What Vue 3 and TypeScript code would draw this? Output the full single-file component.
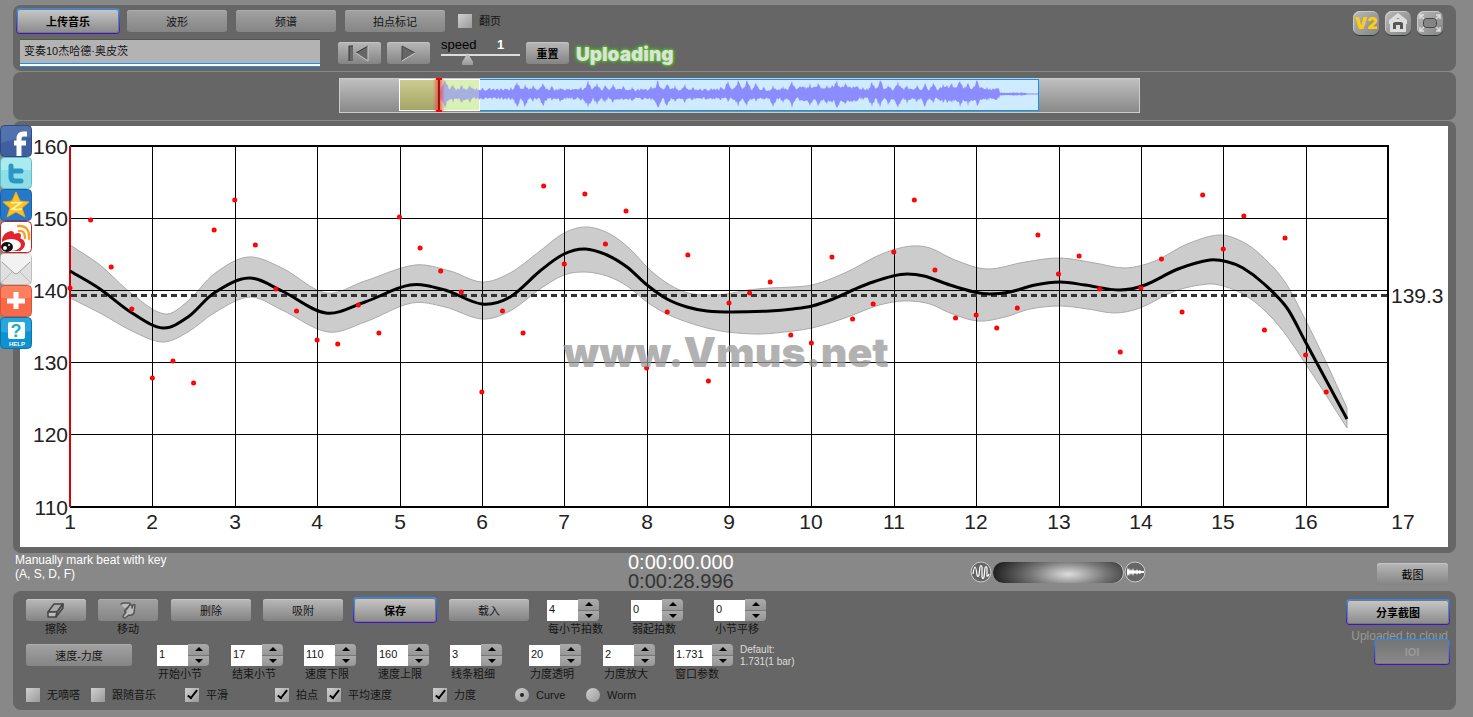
<script setup lang="ts">
import { ref } from 'vue'

type Point = [number, number]

interface Spin {
  id: string
  label: string
  value: string
  wide?: boolean
}

interface Check {
  id: string
  label: string
  on: boolean
}

const title = ref('变奏10杰哈德·奥皮茨')
const speed = ref(1)
const gain = ref(58)
const pageTurn = ref(false)
const drawMode = ref('curve')

const tabs = ['波形', '频谱', '拍点标记']

const beatSpins = ref<Spin[]>([
  { id: 'beats', label: '每小节拍数', value: '4' },
  { id: 'pickup', label: '弱起拍数', value: '0' },
  { id: 'shift', label: '小节平移', value: '0' },
])

const viewSpins = ref<Spin[]>([
  { id: 'first', label: '开始小节', value: '1' },
  { id: 'last', label: '结束小节', value: '17' },
  { id: 'low', label: '速度下限', value: '110' },
  { id: 'high', label: '速度上限', value: '160' },
  { id: 'stroke', label: '线条粗细', value: '3' },
  { id: 'alpha', label: '力度透明', value: '20' },
  { id: 'scale', label: '力度放大', value: '2' },
  { id: 'window', label: '窗口参数', value: '1.731', wide: true },
])

const checks = ref<Check[]>([
  { id: 'mute', label: '无嘀嗒', on: false },
  { id: 'follow', label: '跟随音乐', on: false },
  { id: 'smooth', label: '平滑', on: true },
  { id: 'beat', label: '拍点', on: true },
  { id: 'average', label: '平均速度', on: true },
  { id: 'dynamics', label: '力度', on: true },
])

function step(spin: Spin, by: number) {
  spin.value = String(Math.round((Number(spin.value) + by) * 1000) / 1000)
}

/* Tempo chart: bar numbers run along x, beats per minute along y. */
const left = 50
const right = 1368
const top = 20
const bottom = 381
const barX = (bar: number) => Math.round(left + ((bar - 1) * (right - left)) / 16)
const bars = Array.from({ length: 17 }, (_, i) => i + 1)
const tempos = [160, 150, 140, 130, 120, 110]
const tempoY = (bpm: number) => Math.floor(top + ((160 - bpm) * (bottom - top)) / 50)

const beatY = [
  162, 94, 141, 183, 252, 235, 257, 104, 74, 119, 163, 185, 214, 218, 179, 207,
  91, 122, 145, 166, 266, 185, 207, 60, 138, 68, 118, 85, 242, 186, 129, 255,
  177, 167, 156, 209, 217, 131, 193, 178, 126, 74, 144, 192, 189, 202, 182, 109,
  148, 130, 163, 226, 162, 133, 186, 69, 123, 90, 204, 112, 229, 266,
]
const beats = beatY.map((y, i) => ({ x: left + (i * (right - left)) / 64, y }))

const mid: Point[] = [
  [50, 145], [80, 163], [112, 187], [143, 202], [168, 191], [194, 167],
  [229, 152], [262, 165], [306, 187], [345, 176],
  [390, 159], [425, 164], [462, 178], [490, 171], [520, 145],
  [544, 128], [565, 123], [587, 129], [607, 141], [627, 159], [647, 173], [667, 181], [687, 185],
  [712, 186], [750, 185], [773, 183], [792, 180], [813, 173], [833, 164], [853, 156], [873, 150],
  [887, 148], [904, 150], [930, 159], [954, 166], [970, 168], [990, 166], [1015, 159], [1040, 156],
  [1065, 159], [1100, 164], [1125, 159], [1158, 143], [1190, 134], [1208, 136],
  [1223, 142], [1243, 157], [1267, 182], [1285, 215], [1306, 254], [1327, 293],
]
const upper: Point[] = [
  [50, 119], [80, 139], [112, 168], [145, 188], [168, 175], [194, 148],
  [228, 131], [262, 142], [306, 167], [345, 155],
  [395, 139], [430, 145], [462, 156], [490, 147], [520, 125], [544, 107], [567, 101],
  [590, 108], [610, 123], [630, 144], [650, 159], [668, 167], [687, 169], [707, 168], [728, 164],
  [750, 162], [773, 161], [792, 159], [813, 152], [833, 143], [853, 132], [873, 124], [892, 120],
  [910, 122], [935, 134], [967, 143], [1005, 136], [1040, 132], [1075, 137],
  [1105, 142], [1135, 135], [1165, 119], [1199, 109], [1223, 116], [1243, 131],
  [1265, 156], [1285, 193], [1306, 236], [1327, 282],
]
const lower: Point[] = [
  [50, 172], [80, 187], [112, 205], [143, 216], [168, 206], [194, 187],
  [230, 171], [262, 184], [308, 206], [345, 196],
  [392, 177], [425, 181], [462, 193], [490, 185], [520, 163], [544, 149], [565, 146],
  [587, 150], [607, 160], [627, 176], [647, 188], [667, 196], [687, 202], [707, 206], [740, 208],
  [773, 205], [792, 202], [813, 196], [833, 189], [853, 181], [873, 176], [890, 175], [910, 178],
  [930, 187], [958, 195], [985, 191], [1010, 183], [1040, 180], [1068, 183], [1095, 187],
  [1120, 182], [1155, 165], [1188, 158], [1203, 160], [1223, 168], [1243, 183],
  [1263, 205], [1285, 237], [1306, 269], [1327, 302],
]

/* Cubic through all points; the tangent at each follows its neighbours. */
function spline(points: Point[]): string {
  const slope = (i: number) => {
    const a = points[Math.max(0, i - 1)]
    const b = points[Math.min(points.length - 1, i + 1)]
    return (b[1] - a[1]) / (b[0] - a[0])
  }
  let d = ''
  for (let i = 0; i < points.length - 1; i++) {
    const [x1, y1] = points[i]
    const [x2, y2] = points[i + 1]
    const third = (x2 - x1) / 3
    const c1 = [x1 + third, y1 + slope(i) * third].map((n) => n.toFixed(1))
    const c2 = [x2 - third, y2 - slope(i + 1) * third].map((n) => n.toFixed(1))
    d += `C${c1} ${c2} ${x2},${y2}`
  }
  return d
}

const midPath = `M${mid[0]}${spline(mid)}`
const lowerBack = [...lower].reverse()
const bandPath = `M${upper[0]}${spline(upper)}L${lowerBack[0]}${spline(lowerBack)}Z`

/* Overview waveform: each note is an attack [x, height above, depth below]. */
const attacks: [number, number, number][] = [
  [106, 14, 14], [114, 9, 9], [123, 9, 9], [131, 9, 9], [143, 6, 4], [151, 6, 4], [161, 4, 5],
  [172, 7, 6], [178, 12, 13], [186, 10, 13], [194, 9, 8], [204, 11, 12], [213, 8, 7], [221, 6, 8],
  [242, 7, 7], [249, 14, 14], [258, 11, 11], [266, 9, 9], [274, 10, 9], [284, 8, 6], [293, 7, 7],
  [312, 8, 7], [319, 14, 14], [328, 10, 12], [336, 9, 8], [346, 10, 9], [354, 7, 6], [382, 7, 6],
  [389, 13, 8], [399, 14, 13], [408, 14, 12], [417, 11, 8], [425, 7, 6], [434, 9, 13], [444, 8, 9],
  [453, 13, 14], [461, 8, 7], [471, 11, 12], [479, 11, 12], [488, 9, 10], [493, 9, 9], [498, 14, 14],
  [506, 11, 10], [514, 8, 7], [524, 7, 6], [533, 12, 13], [541, 14, 14], [549, 9, 11], [559, 13, 14],
  [568, 9, 10], [578, 9, 8], [586, 11, 13], [594, 11, 9], [604, 10, 9], [608, 9, 9], [613, 11, 9],
  [621, 13, 13], [629, 11, 12], [638, 14, 12], [648, 7, 7], [657, 6, 6],
]

function wave(): string {
  const rise: string[] = []
  const fall: string[] = []
  for (let x = 101; x <= 699; x++) {
    const noise = Math.abs(Math.sin(x * 12.9898) * 43758.5453) % 1
    const other = Math.abs(Math.sin(x * 78.233) * 12543.853) % 1
    const dense = (x > 460 && x < 520) || (x > 600 && x < 645)
    const body = dense ? 5 : 3
    const tail = x > 687 ? 0.5 : 0.8 + noise * 0.8
    let up = x > 660 ? tail : body + noise * 3
    let down = x > 660 ? tail : body + other * 3
    for (const [at, high, deep] of attacks) {
      const gap = Math.abs(x - at)
      const weight = gap < 2 ? 1 - gap * 0.1 : Math.exp(-(gap - 1) / 4)
      if (x <= 660) {
        up = Math.max(up, high * weight * (gap === 0 ? 1 : 0.6 + noise * 0.4))
        down = Math.max(down, deep * weight * (gap === 0 ? 1 : 0.6 + other * 0.4))
      }
    }
    rise.push(`${x},${(16 - up).toFixed(1)}`)
    fall.unshift(`${x},${(16 + down).toFixed(1)}`)
  }
  return [...rise, ...fall].join(' ')
}
const wavePoints = wave()
</script>

<template>
  <div class="app">
    <nav class="social" aria-label="Share">
      <a href="#facebook" aria-label="Facebook">
        <svg viewBox="0 0 32 32">
          <rect x="0.5" y="0.5" width="31" height="31" rx="4" fill="#3f5f9f" stroke="#2f4b85" />
          <path d="M1 5q0-4 4-4h22q4 0 4 4v7q-14 1-30 6z" fill="#5f7fb8" opacity=".6" />
          <path d="M27 9h-4q-4 0-4 5v17M14 18h12" fill="none" stroke="#fff" stroke-width="5" />
        </svg>
      </a>
      <a href="#twitter" aria-label="Twitter">
        <svg viewBox="0 0 32 32">
          <rect x="0.5" y="0.5" width="31" height="31" rx="4" fill="#8edfe6" stroke="#62bccb" />
          <path d="M1 5q0-4 4-4h22q4 0 4 4v8H1z" fill="#b5f0f2" opacity=".7" />
          <path d="M11 9v11q0 4 4 4h6M11 14h10" fill="none" stroke="#2b97c6" stroke-width="5" stroke-linecap="round" stroke-linejoin="round" />
        </svg>
      </a>
      <a href="#qzone" aria-label="Qzone">
        <svg viewBox="0 0 32 32">
          <rect x="0.5" y="0.5" width="31" height="31" rx="4" fill="#2678c8" stroke="#1c5fa8" />
          <path d="M16 3l4 9 9 1-7 6 3 9-9-5-9 5 3-9-7-6 9-1z" fill="#ffc320" stroke="#f0a818" />
          <path d="M11 14q5-1 10 0l-9 6q5 1 10 0" fill="none" stroke="#fff4b8" stroke-width="1.6" />
        </svg>
      </a>
      <a href="#weibo" aria-label="Weibo">
        <svg viewBox="0 0 32 32">
          <rect x="0.5" y="0.5" width="31" height="31" rx="4" fill="#fff" stroke="#c62020" />
          <path d="M2 18q2-7 9-8 3 0 3 3 7-3 7 2 0 2-1 2 5 2 5 6 0 4-5 7H5q-3-5-3-12z" fill="#e5222b" />
          <ellipse cx="11" cy="24" rx="10" ry="6" fill="#fff" />
          <ellipse cx="7" cy="26" rx="6" ry="5" fill="#111" />
          <circle cx="5" cy="27" r="2" fill="#fff" />
          <circle cx="9" cy="24" r="1" fill="#fff" />
          <path d="M19 10q6-1 6 7M18 5q12-1 11 13" fill="none" stroke="#f5a02a" stroke-width="2.4" stroke-linecap="round" />
        </svg>
      </a>
      <a href="#mail" aria-label="Mail">
        <svg viewBox="0 0 32 32">
          <rect x="0.5" y="0.5" width="31" height="31" rx="4" fill="#e0e0e0" stroke="#bdbdbd" />
          <path d="M1 30l12-12M31 30L19 18" stroke="#bbb" />
          <path d="M1 8l15 14L31 8V3q0-2-2-2H3Q1 1 1 3z" fill="#f2f2f2" />
          <path d="M2 9l12 11q2 2 4 0L30 9" fill="none" stroke="#a0a0a0" />
        </svg>
      </a>
      <a href="#more" aria-label="More">
        <svg viewBox="0 0 32 32">
          <rect x="0.5" y="0.5" width="31" height="31" rx="4" fill="#f8694a" stroke="#dd5236" />
          <path d="M1 5q0-4 4-4h22q4 0 4 4v8H1z" fill="#ff8e70" opacity=".6" />
          <path d="M16 7v17M7 16h18" stroke="#fff" stroke-width="5" />
        </svg>
      </a>
      <a href="#help" aria-label="Help">
        <svg viewBox="0 0 32 32">
          <rect x="0.5" y="0.5" width="31" height="31" rx="4" fill="#0f92cf" stroke="#0a74aa" />
          <path d="M1 5q0-4 4-4h22q4 0 4 4v9q-14 3-30 1z" fill="#35b4e6" opacity=".6" />
          <rect x="8" y="5" width="17" height="17" rx="2" fill="#fff" />
          <text x="16" y="20" class="glyph mark">?</text>
          <text x="17" y="29" class="glyph help">HELP</text>
        </svg>
      </a>
    </nav>

    <header class="panel head">
      <div class="head-main">
        <div class="row tabs">
          <button type="button" class="btn primary">上传音乐</button>
          <button v-for="tab in tabs" :key="tab" type="button" class="btn dim">{{ tab }}</button>
          <label class="tick turn"><input v-model="pageTurn" type="checkbox" />翻页</label>
        </div>
        <div class="row transport">
          <input v-model="title" class="title" type="text" aria-label="Title" />
          <div class="keys">
            <button type="button" class="btn key" aria-label="Rewind">
              <svg viewBox="0 0 43 21">
                <rect x="11" y="3" width="4" height="15" fill="#666" />
                <path d="M11 18V3h4" fill="none" stroke="#333" />
                <path d="M30 3v15L18 10z" fill="#666" />
                <path d="M18 10L30 3" stroke="#333" />
                <path d="M30 3v15L18 10" fill="none" stroke="#ccc" />
              </svg>
            </button>
            <button type="button" class="btn key" aria-label="Play">
              <svg viewBox="0 0 43 21">
                <path d="M15 3v15l13-8z" fill="#666" />
                <path d="M15 18V3l13 7" fill="none" stroke="#444" />
                <path d="M15 18l13-8" stroke="#ccc" />
              </svg>
            </button>
          </div>
          <div class="speed">
            <label for="speed">speed</label>
            <output for="speed">{{ speed }}</output>
            <input id="speed" v-model.number="speed" type="range" min="0.1" max="3" step="0.1" />
          </div>
          <button type="button" class="btn key strong">重置</button>
          <span class="status">Uploading</span>
        </div>
      </div>
      <div class="corner">
        <button type="button" class="chip v2">V2</button>
        <button type="button" class="chip" aria-label="Home">
          <svg viewBox="0 0 26 24">
            <path d="M13 2l9 7v4h-1v8H5v-8H4V9z" fill="#ddd" />
            <path d="M8 18v-6l2-1h6l2 1v6h-3v-4h-4v4z" fill="#555" />
            <path d="M11 8l2-1 2 1z" fill="#777" />
          </svg>
        </button>
        <button type="button" class="chip" aria-label="Full screen">
          <svg viewBox="0 0 26 24" fill="none">
            <rect x="6.5" y="7.5" width="13" height="9" rx="3" fill="#858585" stroke="#444" />
            <path d="M3 8V4h4M3 4l4 4M19 4h4v4M23 4l-4 4M3 16v4h4M3 20l4-4M23 16v4h-4M23 20l-4-4" stroke="#ddd" stroke-width="1.5" />
          </svg>
        </button>
      </div>
    </header>

    <section class="panel overview" aria-label="Overview">
      <svg class="strip" viewBox="0 0 801 35">
        <defs>
          <linearGradient id="steel" x1="0" y1="0" x2="0" y2="1">
            <stop offset="0" stop-color="#c0c0c0" />
            <stop offset="1" stop-color="#888" />
          </linearGradient>
          <linearGradient id="khaki" x1="0" y1="0" x2="0" y2="1">
            <stop offset="0" stop-color="#cccc92" />
            <stop offset="1" stop-color="#a5a566" />
          </linearGradient>
          <linearGradient id="glow">
            <stop offset="0" stop-color="#f33" stop-opacity="0" />
            <stop offset=".5" stop-color="#f33" stop-opacity=".8" />
            <stop offset="1" stop-color="#f33" stop-opacity="0" />
          </linearGradient>
        </defs>
        <rect x="0.5" y="0.5" width="800" height="34" fill="url(#steel)" stroke="#ccc" />
        <rect x="60.5" y="1.5" width="639" height="31" fill="#cfebff" stroke="#0b94f0" />
        <rect x="60.5" y="1.5" width="80" height="31" fill="#d9f1bf" stroke="#fff" />
        <rect x="61" y="2" width="39" height="30" fill="url(#khaki)" />
        <polygon :points="wavePoints" fill="#8a8cff" />
        <rect x="101" y="2" width="39" height="30" fill="#d9f1a0" opacity=".35" />
        <rect x="94" y="1" width="12" height="33" fill="url(#glow)" />
        <path d="M100 1v32" stroke="#700" stroke-width="1.5" />
        <path d="M97 1h6M97 33h6" stroke="#f00" stroke-width="2" />
      </svg>
    </section>

    <main class="panel stage">
      <svg class="chart" viewBox="0 0 1428 421" role="img" aria-label="Tempo curve">
        <path :d="bandPath" fill="#ccc" stroke="#aaa" />
        <g class="grid">
          <path v-for="bar in bars" :key="bar" :d="`M${barX(bar) + 0.5} ${top}V${bottom}`" />
          <path v-for="bpm in tempos" :key="bpm" :d="`M${left} ${tempoY(bpm) + 0.5}H${right}`" />
        </g>
        <path d="M50 20H1368V381H50" fill="none" stroke="#000" stroke-width="2" />
        <path d="M50 20V381" stroke="#d00" stroke-width="2" />
        <path d="M51 169.5H1368" class="average" />
        <path :d="midPath" class="curve" />
        <g class="beats">
          <circle v-for="beat in beats" :key="beat.x" :cx="beat.x" :cy="beat.y" r="1.5" />
        </g>
        <text x="706" y="241" class="watermark">www.Vmus.net</text>
        <text v-for="bpm in tempos" :key="bpm" x="48" :y="tempoY(bpm) + 8" class="axis end">{{ bpm }}</text>
        <text
          v-for="bar in bars"
          :key="bar"
          :x="bar === 17 ? barX(bar) + 15 : barX(bar)"
          y="403"
          class="axis middle"
        >{{ bar }}</text>
        <text x="1371" y="177" class="axis">139.3</text>
      </svg>
    </main>

    <section class="status-bar">
      <p class="hint">Manually mark beat with key<br />(A, S, D, F)</p>
      <div class="clock">
        <div class="now">0:00:00.000</div>
        <div class="total">0:00:28.996</div>
      </div>
      <div class="gain">
        <svg viewBox="0 0 22 22" aria-hidden="true">
          <circle cx="11" cy="11" r="10" fill="#666" stroke="#ccc" />
          <path d="M3 13q1-7 2-7t2 8q1 3 2 0l1-8q1-3 2 0v10q1 3 2 0l1-9q1-3 2 0v8q1 1 2-2" fill="none" stroke="#fff" stroke-width="1.2" />
        </svg>
        <input v-model.number="gain" type="range" min="0" max="100" aria-label="Zoom" />
        <svg viewBox="0 0 22 22" aria-hidden="true">
          <circle cx="11" cy="11" r="10" fill="#666" stroke="#ccc" />
          <path d="M3 10V6l1 3 1-2 1 3 1-2 1 2 1-3 1 3 1-1 1 1 1-2 1 2 2-1 1 1h3v2h-3l-1 1-2-1-1 2-1-2-1 1-1-1-1 3-1-3-1 2-1-2-1 3-1-2-1 3z" fill="#fff" />
        </svg>
      </div>
      <button type="button" class="btn shot">截图</button>
    </section>

    <footer class="panel tools">
      <div class="tool-rows">
        <div class="tool-row actions">
          <div class="tool">
            <button type="button" class="btn" aria-label="擦除">
              <svg viewBox="0 0 60 21" stroke="#444" stroke-width="1.5" stroke-linejoin="round">
                <path d="M22 12l6-8h9l-6 8z" fill="#aaa" />
                <path d="M22 12h9l-1 5h-8z" fill="#bbb" />
                <path d="M31 12l6-8v4l-7 9z" fill="#888" />
              </svg>
            </button>
            <span class="caption centred">擦除</span>
          </div>
          <div class="tool">
            <button type="button" class="btn dim" aria-label="移动">
              <svg viewBox="0 0 60 21" stroke-linejoin="round" stroke-linecap="round">
                <path d="M23 4q1-1 4-1h4q2 1 1 2l-5 5q-1 2 1 2l-3 4q0 2 2 2l4-3q3 1 5-2l1-8q-1-1-2 0l-1 3V5q-2-1-3 1l-3 4" fill="#bbb" stroke="#555" stroke-width="1.5" />
              </svg>
            </button>
            <span class="caption centred">移动</span>
          </div>
          <div><button type="button" class="btn">删除</button></div>
          <div><button type="button" class="btn">吸附</button></div>
          <div><button type="button" class="btn primary">保存</button></div>
          <div><button type="button" class="btn">载入</button></div>
          <div v-for="spin in beatSpins" :key="spin.id" class="spin">
            <div class="spin-box">
              <input :id="spin.id" v-model="spin.value" type="text" />
              <span class="steps">
                <button type="button" aria-label="+" @click="step(spin, 1)"><i class="up"></i></button>
                <button type="button" aria-label="-" @click="step(spin, -1)"><i class="down"></i></button>
              </span>
            </div>
            <label class="caption" :for="spin.id">{{ spin.label }}</label>
          </div>
        </div>

        <div class="tool-row ranges">
          <div><button type="button" class="btn dim">速度-力度</button></div>
          <div v-for="spin in viewSpins" :key="spin.id" class="spin" :class="{ wide: spin.wide }">
            <div class="spin-box">
              <input :id="spin.id" v-model="spin.value" type="text" />
              <span class="steps">
                <button type="button" aria-label="+" @click="step(spin, 1)"><i class="up"></i></button>
                <button type="button" aria-label="-" @click="step(spin, -1)"><i class="down"></i></button>
              </span>
            </div>
            <label class="caption" :for="spin.id">{{ spin.label }}</label>
          </div>
          <p class="default">Default:<br />1.731(1 bar)</p>
        </div>

        <div class="tool-row options">
          <label v-for="check in checks" :key="check.id" class="tick">
            <input v-model="check.on" type="checkbox" />{{ check.label }}
          </label>
          <label class="tick"><input v-model="drawMode" type="radio" name="mode" value="curve" />Curve</label>
          <label class="tick"><input v-model="drawMode" type="radio" name="mode" value="worm" />Worm</label>
        </div>
      </div>

      <div class="share">
        <button type="button" class="btn primary">分享截图</button>
        <span class="cloud">Uploaded to cloud</span>
        <button type="button" class="btn primary link" disabled>IOI</button>
      </div>
    </footer>
  </div>
</template>

<style>
html,
body {
  background: #888;
}
</style>

<style scoped>
.app {
  position: relative;
  min-width: 1100px;
  padding: 5px 17px 7px 13px;
  background: #888;
  color: #151515;
  font-family: "Liberation Sans", "Noto Sans CJK SC", sans-serif;
  font-size: 11px;
  line-height: 14px;
}

.app *,
.app *::before,
.app *::after {
  box-sizing: border-box;
}

button,
input {
  margin: 0;
  font-family: inherit;
  font-size: 11px;
  color: inherit;
}

p {
  margin: 0;
}

svg {
  display: block;
}

.panel {
  margin-bottom: 1px;
  border-radius: 8px;
  background: #666;
}

/* share links along the left edge */
.social {
  position: absolute;
  z-index: 2;
  left: 0;
  top: 125px;
  display: flex;
  flex-direction: column;
}

.social a,
.social svg {
  display: block;
  width: 32px;
  height: 32px;
}

.glyph {
  font-weight: 700;
}

.glyph.mark {
  font-size: 18px;
  text-anchor: middle;
  fill: #18b0c8;
}

.glyph.help {
  font-size: 6px;
  text-anchor: middle;
  fill: #fff;
}

/* buttons */
.btn {
  display: inline-flex;
  align-items: center;
  justify-content: center;
  height: 22px;
  padding: 0;
  border: 0;
  border-radius: 3px;
  background: linear-gradient(#b8b8b8, #848484);
  box-shadow: inset 0 1px #c4c4c4;
  white-space: nowrap;
}

.btn.dim {
  background: linear-gradient(#a2a2a2, #858585);
  box-shadow: inset 0 1px #acacac;
}

.btn.primary {
  height: 26px;
  margin: -2px;
  border: 1px solid transparent;
  border-radius: 4px;
  background:
    linear-gradient(#c8c8c8, #8a8a8a) padding-box,
    linear-gradient(#2090ff, #4010d0) border-box;
  box-shadow: inset 0 0 0 1px #777;
  color: #000;
  font-weight: 700;
}

.strong {
  font-weight: 700;
}

/* check boxes and radios */
.tick {
  display: flex;
  align-items: center;
  gap: 7px;
  height: 14px;
  white-space: nowrap;
}

.tick input {
  appearance: none;
  position: relative;
  flex: none;
  width: 14px;
  height: 14px;
  background: linear-gradient(135deg, #d0d0d0, #9a9a9a);
}

.tick input[type="checkbox"]:checked::after {
  content: "";
  position: absolute;
  left: 5px;
  top: 0;
  width: 5px;
  height: 11px;
  border: solid #000;
  border-width: 0 2px 2px 0;
  transform: rotate(38deg);
}

.tick input[type="radio"] {
  border-radius: 50%;
}

.tick input[type="radio"]:checked::after {
  content: "";
  position: absolute;
  inset: 5px;
  border-radius: 50%;
  background: #222;
}

/* header */
.head {
  display: flex;
  justify-content: space-between;
  padding: 5px 13px 4px 5px;
}

.row {
  display: flex;
}

.tabs {
  gap: 9px;
  height: 21px;
  align-items: center;
}

.tabs .btn {
  width: 100px;
}

.tabs .primary {
  width: 104px;
}

.turn {
  margin-left: 4px;
}

.transport {
  align-items: center;
  height: 28px;
  margin-top: 8px;
  padding-left: 2px;
}

.title {
  width: 300px;
  height: 28px;
  padding: 0 4px 7px;
  border: 0;
  border-top: 1px solid #555;
  outline: 0;
  background: #b3b3b3;
  box-shadow:
    inset 0 -1px #1a90f0,
    inset 0 -3px #fff,
    inset 0 -4px #1a90f0;
}

.keys {
  display: flex;
  gap: 6px;
  margin: 0 11px 0 18px;
}

.key {
  width: 43px;
  color: #000;
}

.key svg {
  width: 43px;
  height: 21px;
}

.speed {
  display: grid;
  grid-template-columns: 56px auto;
  width: 79px;
  margin-right: 6px;
  padding-bottom: 3px;
  font-size: 13px;
  line-height: 13px;
  color: #000;
}

.speed output {
  color: #fff;
  font-weight: 700;
}

.speed input {
  appearance: none;
  grid-column: 1 / -1;
  width: 79px;
  height: 14px;
  background: linear-gradient(#ddd, #ddd) 0 3px / 100% 2px no-repeat;
}

.speed input::-webkit-slider-thumb {
  appearance: none;
  width: 11px;
  height: 12px;
  margin-top: 2px;
  background: linear-gradient(#ccc, #999);
  clip-path: polygon(50% 0, 100% 75%, 100% 100%, 0 100%, 0 75%);
}

.status {
  margin-left: 7px;
  padding-top: 3px;
  color: #e0e0e0;
  font-family: Inter, "DejaVu Sans", sans-serif;
  font-size: 19px;
  font-weight: 900;
  line-height: 20px;
  text-shadow:
    0 0 2px #5c2,
    0 0 3px #5c2,
    0 0 4px #5c2;
}

.corner {
  display: flex;
  gap: 6px;
  padding-top: 1px;
}

.chip {
  width: 26px;
  height: 24px;
  padding: 0;
  border: 0;
  border-radius: 7px;
  background: linear-gradient(135deg, #b8b8b8, #848484);
  box-shadow:
    inset 1px 1px #c8c8c8,
    0 1px #2a3a34;
}

.chip.v2 {
  color: #ffcc10;
  font-family: Inter, "DejaVu Sans", sans-serif;
  font-size: 16px;
  font-weight: 900;
}

/* overview */
.overview {
  display: flex;
  justify-content: center;
  padding: 6px 0 7px 10px;
}

.strip {
  width: 100%;
  max-width: 801px;
}

/* chart */
.stage {
  margin-bottom: 0;
  padding: 5px 8px 6px 7px;
}

.chart {
  width: 100%;
  background: #fff;
}

.grid path {
  stroke: #000;
  stroke-width: 1;
}

.average {
  stroke: #333;
  stroke-width: 3;
  stroke-dasharray: 6 4;
}

.curve {
  fill: none;
  stroke: #000;
  stroke-width: 3;
}

.beats circle {
  fill: #c55;
  stroke: #f00;
  stroke-width: 2;
}

.watermark {
  fill: #999;
  fill-opacity: 0.75;
  font-family: Inter, "DejaVu Sans", sans-serif;
  font-size: 41px;
  font-weight: 900;
  text-anchor: middle;
}

.axis {
  fill: #222;
  font-size: 21px;
}

.end {
  text-anchor: end;
}

.middle {
  text-anchor: middle;
}

/* strip under the chart */
.status-bar {
  display: grid;
  grid-template-columns: 613fr 342fr 407fr 71px;
  align-items: center;
  height: 38px;
  padding: 0 8px 0 2px;
}

.hint {
  align-self: start;
  color: #fff;
  font-size: 12px;
}

.clock {
  font-size: 20px;
  line-height: 19px;
}

.now {
  color: #fff;
}

.total {
  color: #333;
}

.gain {
  display: flex;
  align-items: center;
  gap: 1px;
}

.gain svg {
  width: 22px;
  height: 22px;
}

.gain input {
  appearance: none;
  width: 130px;
  height: 21px;
  border-radius: 11px;
  background: radial-gradient(ellipse 75px 26px at 58% 58%, #ddd, #777 50%, #222);
  box-shadow: 1px 0 #ccc;
}

.gain input::-webkit-slider-thumb {
  appearance: none;
  width: 10px;
  height: 21px;
}

.shot {
  margin-top: 4px;
  color: #000;
}

/* tools */
.tools {
  display: flex;
  justify-content: space-between;
  margin-bottom: 0;
  padding: 8px 8px 8px 13px;
}

.tool-row {
  display: grid;
  align-items: start;
}

.actions {
  grid-template-columns: 72px 73px 92px 92px 94px 98px 84px 83px auto;
  height: 45px;
}

.ranges {
  grid-template-columns: 131px 74px 73px 73px 73px 79px 74px 71px 66px auto;
  height: 44px;
}

.options {
  grid-template-columns: 65px 94px 90px 52px 106px 82px 71px auto;
  height: 14px;
}

.tool-row .btn {
  width: 80px;
  vertical-align: top;
}

.tool-row .primary {
  width: 84px;
}

.tool .btn {
  width: 60px;
}

.tool svg {
  width: 60px;
  height: 21px;
}

.tool-row.ranges .btn {
  width: 106px;
}

.caption {
  display: block;
  margin-top: 1px;
  padding-left: 1px;
  white-space: nowrap;
}

.centred {
  width: 60px;
  padding: 0;
  text-align: center;
}

.spin-box {
  display: flex;
  height: 22px;
}

.spin-box input {
  width: 31px;
  height: 21px;
  padding: 0 2px 4px;
  margin-top: 1px;
  border: 0;
  outline: 0;
  background: #fff;
}

.wide .spin-box input {
  width: 38px;
}

.steps {
  display: flex;
  flex-direction: column;
  gap: 1px;
  width: 21px;
  height: 22px;
  overflow: hidden;
  border-radius: 0 4px 4px 0;
  background: #777;
}

.steps button {
  display: flex;
  flex: 1;
  align-items: center;
  justify-content: center;
  padding: 0;
  border: 0;
  background: linear-gradient(#aaa, #979797);
}

.steps i {
  border: 4px solid transparent;
}

.steps .up {
  border-top: 0;
  border-bottom-color: #000;
}

.steps .down {
  border-bottom: 0;
  border-top-color: #000;
}

.default {
  color: #ddd;
  font-size: 10px;
  line-height: 12px;
  white-space: nowrap;
}

.share {
  display: flex;
  flex-direction: column;
  align-items: flex-end;
  padding-top: 2px;
}

.share .btn {
  width: 104px;
}

.cloud {
  margin-top: 7px;
  color: #999;
  font-size: 12px;
  line-height: 12px;
}

.share .link {
  width: 76px;
  margin-top: -3px;
  background:
    linear-gradient(#747474, #8a8a8a) padding-box,
    linear-gradient(#2090ff, #4010d0) border-box;
  color: #999;
}
</style>
